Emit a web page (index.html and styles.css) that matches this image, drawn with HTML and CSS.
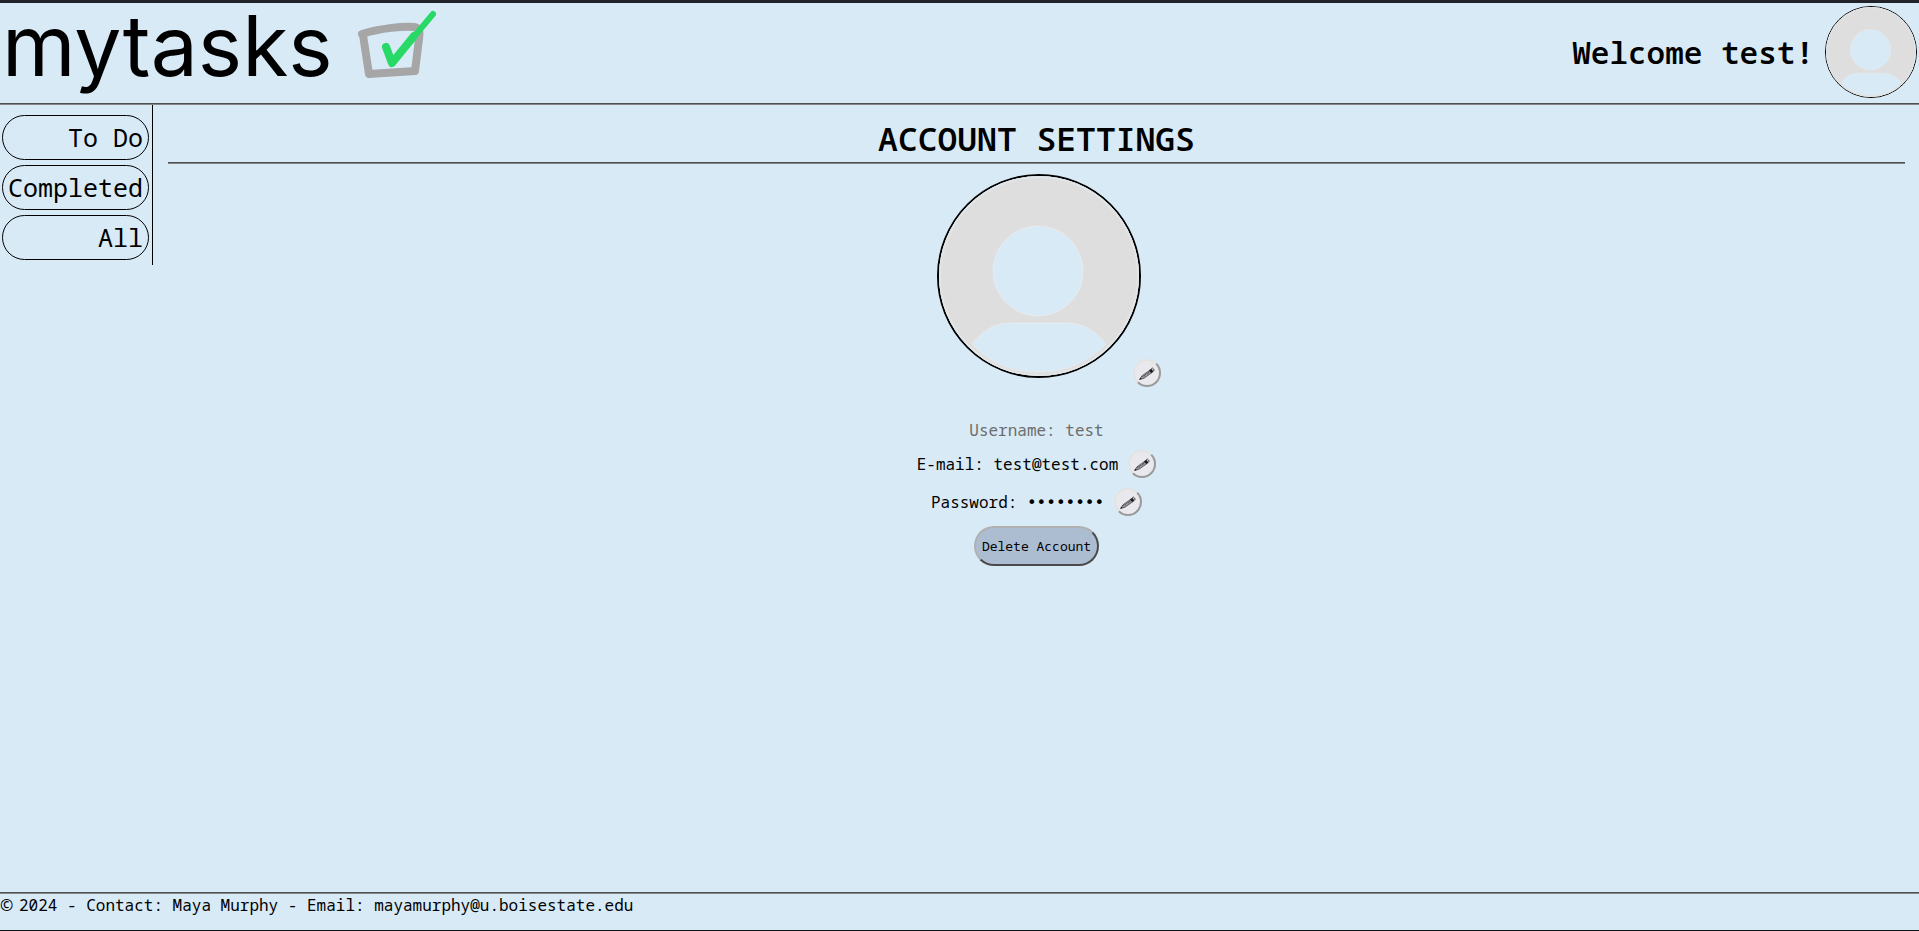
FILE: index.html
```html
<!DOCTYPE html>
<html lang="en">
<head>
<meta charset="utf-8">
<title>mytasks - Account Settings</title>
<link rel="stylesheet" href="styles.css">
</head>
<body>
<svg width="0" height="0" class="defs" aria-hidden="true">
  <symbol id="person" viewBox="0 0 200 200">
    <circle cx="100" cy="100" r="100" fill="#dedede"/>
    <circle cx="100" cy="100" r="99" fill="none" stroke="#e2e5e7" stroke-width="2"/>
    <circle cx="99" cy="95" r="45" fill="#d8eaf6" stroke="#e8ebed"/>
    <path d="M33 168C43 156 54 147 71 147H128C145 147 157 156 167 168C149 187 125 196 99 196S51 187 33 168Z" fill="#d8eaf6" stroke="#e8ebed"/>
  </symbol>
  <symbol id="pencil" viewBox="0 0 24 24">
    <path d="M4.500 18.500L7 14.800L15.500 8.700L17.500 11.200L9 17.200Z" fill="#a4a8ad" stroke="#333" stroke-width="0.7"/>
    <path d="M7.500 16L16.500 9.700" stroke="#333" stroke-width="1.4" stroke-dasharray="0.8 1"/>
    <path d="M14 9.500L16.300 7.800L18.300 10.500L16.300 12Z" fill="#15181c"/>
    <path d="M4.500 18.500L5.500 16.800L6.800 17.900Z" fill="#111"/>
    <ellipse cx="17.800" cy="8.600" rx="1" ry="1.700" fill="#e9e9ed" stroke="#222" stroke-width="0.7" transform="rotate(-36 17.800 8.600)"/>
  </symbol>
</svg>
<header class="header">
  <a class="logo" href="#">
    <span class="logo-text">mytasks</span>
    <svg class="logo-mark" width="80" height="70" viewBox="356 9 80 70" fill="none" stroke-linecap="round" stroke-linejoin="round" aria-hidden="true">
      <path d="M361 34C380 28 403 26 413 27C419 28 419 32 418 39L414 71L368 74L362 35" stroke="#a6a6a6" stroke-width="8"/>
      <path d="M385 47L391 63L432 14" stroke="#29d967" stroke-width="6"/>
      <path d="M385 47L391 63L413 36" stroke="#29d967" stroke-width="8"/>
    </svg>
  </a>
  <div class="welcome">
    <span>Welcome test!</span>
    <a href="#" class="avatar" aria-label="Account"><svg><use href="#person"/></svg></a>
  </div>
</header>
<hr class="rule">
<div class="body">
  <nav class="nav">
    <a href="#">To Do</a>
    <a href="#">Completed</a>
    <a href="#">All</a>
  </nav>
  <main class="main">
    <h1>ACCOUNT SETTINGS</h1>
    <hr class="rule">
    <div class="photo">
      <div class="avatar avatar-large"><svg><use href="#person"/></svg></div>
      <button class="edit photo-edit" aria-label="Edit picture"><svg><use href="#pencil"/></svg></button>
    </div>
    <p class="row muted">Username: test</p>
    <div class="row"><span>E-mail: test@test.com</span><button class="edit" aria-label="Edit e-mail"><svg><use href="#pencil"/></svg></button></div>
    <div class="row"><span>Password: <span class="dots">••••••••</span></span><button class="edit" aria-label="Edit password"><svg><use href="#pencil"/></svg></button></div>
    <button class="delete">Delete Account</button>
  </main>
</div>
<footer class="footer">
  <hr class="rule">
  <p><span class="copy">©</span>2024 - Contact: Maya Murphy - Email: mayamurphy@u.boisestate.edu</p>
</footer>
</body>
</html>
```
FILE: styles.css
```css
* {
  box-sizing: border-box;
}

body {
  margin: 0;
  min-height: 100vh;
  display: flex;
  flex-direction: column;
  background: #d8eaf6;
  border-top: 3px solid #22222b;
  border-bottom: 1px solid #111;
  color: #000;
  font: 16px/20px "Noto Sans Mono", "Liberation Mono", monospace;
}

.defs {
  position: absolute;
}

.header {
  display: flex;
  justify-content: space-between;
  align-items: flex-start;
  height: 100px;
  padding: 3px 2px 0 2px;
}

.logo {
  display: flex;
  align-items: flex-start;
  gap: 24px;
  color: #000;
  text-decoration: none;
}

.logo-text {
  font: 84px/80px Inter, sans-serif;
}

.logo-mark {
  margin-top: 3px;
}

.welcome {
  display: flex;
  align-items: center;
  gap: 11px;
  font-size: 31px;
  line-height: 40px;
  font-weight: 600;
}

.avatar {
  display: block;
  width: 92px;
  height: 92px;
  border: 1px solid #000;
  border-radius: 50%;
}

.avatar svg {
  display: block;
  width: 100%;
  height: 100%;
}

.avatar-large {
  width: 204px;
  height: 204px;
  border-width: 2px;
}

.rule {
  width: 100%;
  margin: 0;
  border: 0;
  border-top: 1px solid #4e5052;
  border-bottom: 1px solid #868686;
}

.body {
  display: flex;
  align-items: flex-start;
  flex: 1;
}

.nav {
  display: flex;
  flex-direction: column;
  gap: 5px;
  padding: 10px 3px 5px 2px;
  border-right: 1px solid #000;
}

.nav a {
  padding: 6px 5px;
  border: 1px solid #000;
  border-radius: 23px;
  color: #000;
  font-size: 25px;
  line-height: 31px;
  text-align: right;
  text-decoration: none;
}

.main {
  flex: 1;
  display: flex;
  flex-direction: column;
  align-items: center;
  padding: 12px 14px 0 15px;
}

h1 {
  margin: 0 0 1px;
  font-size: 33px;
  line-height: 44px;
  font-weight: 600;
}

.photo {
  position: relative;
  margin: 10px 0 42px 4px;
}

.edit {
  display: block;
  flex: none;
  width: 28px;
  height: 28px;
  padding: 0;
  border: 2px solid;
  border-color: #e3e3e3 #999 #999 #e3e3e3;
  border-radius: 50%;
  background: #e9e9ed;
}

.edit svg {
  display: block;
  width: 24px;
  height: 24px;
}

.photo-edit {
  position: absolute;
  right: -20px;
  bottom: -9px;
}

.row {
  display: flex;
  align-items: center;
  gap: 10px;
  margin: 0 0 10px;
}

.dots {
  font-family: "DejaVu Sans Mono", monospace;
}

.muted {
  color: #6d6d6d;
}

.delete {
  height: 40px;
  padding: 0 6px;
  border: 2px solid;
  border-color: #b0b0b0 #4a4a4a #4a4a4a #b0b0b0;
  border-radius: 20px;
  background: #adbdd1;
  color: #000;
  font-family: inherit;
  font-size: 13px;
}

.footer p {
  margin: 0;
  padding: 1px 0 15px;
}

.copy {
  display: inline-block;
  width: 19px;
  font-family: "Noto Sans", sans-serif;
}
```
